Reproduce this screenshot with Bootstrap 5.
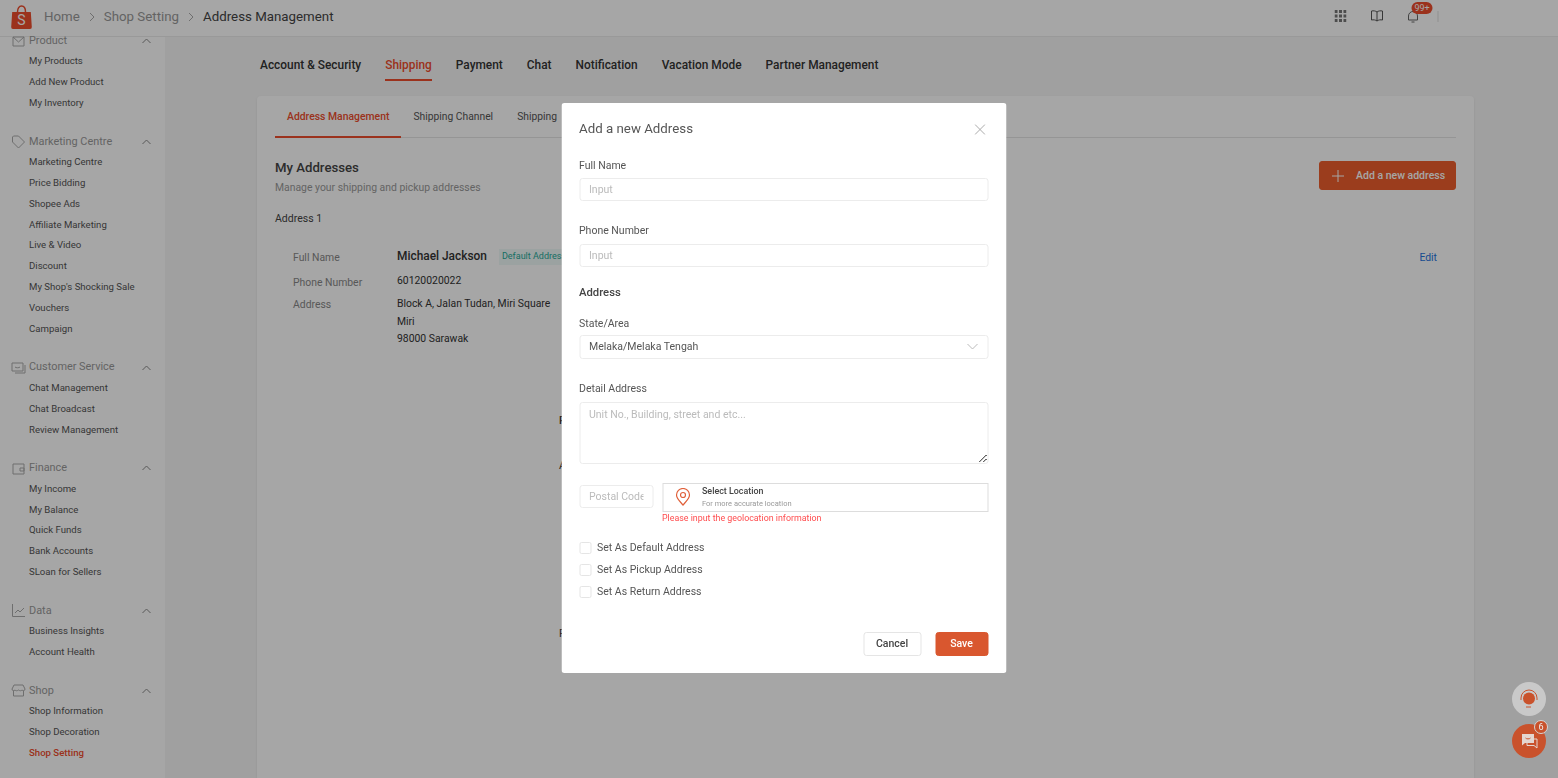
<!DOCTYPE html>
<html lang="en">
<head>
<meta charset="UTF-8">
<title>Address Management</title>
<link href="https://cdn.jsdelivr.net/npm/bootstrap@5.3.0/dist/css/bootstrap.min.css" rel="stylesheet">
<style>
    html, body { height: 100%; }
    body {
        font-family: Roboto, "Liberation Sans", sans-serif;
        background: #f6f6f6;
        color: #333;
        overflow: hidden;
    }
    .topbar {
        height: 37px;
        background: #fff;
        border-bottom: 1px solid #ececec;
        padding: 0 121px 2px 11px;
    }
    .crumbs { font-size: 13.3px; color: #999; margin-left: 12px; }
    .crumbs .sep { width: 24px; display: flex; justify-content: center; }
    .crumbs .now { color: #444; }
    .top-divider { width: 1px; height: 11px; background: #ddd; margin-left: -5px; }
    .top-icons { gap: 24px; margin-bottom: 2px; transform: translateX(1.5px); }
    .bell-badge {
        position: absolute; top: -8px; left: 4px;
        background: #ee4d2d; color: #fff;
        font-size: 9px; line-height: 12px;
        padding: 0 3px; border-radius: 6px;
    }
    .layout { height: calc(100% - 37px); }
    .sidebar {
        width: 165px; background: #fff;
        flex: none; position: relative;
        font-size: 9.6px;
    }
    .sidebar .inner { margin-top: -6.4px; padding-left: 11px; padding-right: 14px; }
    .side-group { margin-bottom: 17.7px; }
    .side-group:last-child { margin-bottom: 0; }
    .side-head {
        height: 20.8px; color: #999; font-size: 10.9px;
        display: flex; align-items: center;
    }
    .side-head svg.ic { width: 15px; height: 15px; margin-right: 3px; flex: none; }
    .side-head svg.chev { width: 9px; height: 6px; margin-left: auto; }
    .side-link { height: 20.8px; line-height: 20.8px; padding-left: 18px; color: #555; }
    .side-link.active { color: #ee4d2d; font-weight: 500; }
    .main { padding-left: 92px; padding-right: 84px; min-width: 0; }
    .top-tabs { height: 59px; gap: 24px; padding: 18px 0 0 3px; font-size: 11.9px; font-weight: 500; color: #333; flex: none; }
    .top-tabs span { height: 26px; line-height: 20px; white-space: nowrap; }
    .top-tabs .active { color: #ee4d2d; border-bottom: 2px solid #ee4d2d; }
    .panel {
        background: #fff; border-radius: 4px 4px 0 0; flex-grow: 1;
        padding: 0 18px; box-shadow: 0 1px 3px rgba(0,0,0,.08);
    }
    .sub-tabs { height: 42px; border-bottom: 1px solid #e5e5e5; font-size: 10.3px; color: #555; }
    .sub-tabs span { padding: 13px 12px 0; white-space: nowrap; }
    .sub-tabs .active { color: #ee4d2d; font-size: 10.4px; font-weight: 500; border-bottom: 2px solid #ee4d2d; height: 42px; }
    .head-row { padding-top: 22px; }
    .panel h2 { font-size: 13.2px; font-weight: 500; margin: 0; color: #444; line-height: 16px; }
    .panel .sub { font-size: 10.4px; color: #999; margin-top: 5px; line-height: 14px; }
    .btn-add {
        --bs-btn-bg: #ee5f2d; --bs-btn-color: #fff; --bs-btn-border-color: #ee5f2d;
        width: 137px; height: 29px; margin-top: 1px; padding: 0 0 0 12px; font-size: 10.5px; font-weight: 500;
        border-radius: 3px;
    }
    .addr-title { font-size: 10.5px; margin-top: 17px; line-height: 14px; color: #444; }
    .addr { margin-top: 21px; padding-left: 18px; font-size: 10.4px; }
    .addr .k { width: 104px; color: #888; flex: none; }
    .addr .name { font-size: 11.9px; font-weight: 500; margin-top: -2px; }
    .addr-row1 { height: 22px; }
    .addr-row2 { height: 26px; }
    .addr-row2 .k { margin-top: 1px; }
    .addr-row2 .val { margin-top: -2px; }
    .addr-row3 { line-height: 17.5px; }
    .addr-row3 .k { margin-top: 1px; }
    .tag { color: #26aa99; background: #eef9f7; font-size: 9px; padding: 1px 3px; margin: -2px 0 0 12px; }
    .edit { color: #2673dd; margin-left: auto; margin-right: 19px; }
    .peek { margin-left: 284px; font-size: 11px; color: #333; }
    .peek-a { margin-top: 65px; }
    .peek-b { margin-top: 29px; }
    .peek-c { margin-top: 151px; }

    .modal-backdrop { --bs-backdrop-opacity: .35; }
    .modal-dialog { --bs-modal-width: 445px; margin: 103px auto 0; transform: translateX(4.5px); }
    .modal-content {
        --bs-modal-border-width: 0; --bs-modal-border-radius: 3px;
        height: 570px; padding: 0 18px; font-size: 10.5px; color: #555;
    }
    .modal-title { font-size: 13.3px; font-weight: 400; color: #555; line-height: 16px; }
    .top-row { padding-top: 18px; height: 55px; }
    .close-x { width: 11px; height: 11px; margin: 3px 3px 0 0; }
    .lbl { line-height: 14px; padding-top: 1px; margin-bottom: 4.5px; display: block; color: #555; }
    .form-control, .form-select {
        font-size: 10.5px; color: #555; border: 1px solid #ececec; border-radius: 3px;
        padding: 0 9px; height: 23.5px; min-height: 0; line-height: 21px;
    }
    .form-control::placeholder { color: #bbb; }
    .form-select {
        background-size: 12px 9px; background-position: right 9px center;
        background-image: url("data:image/svg+xml,%3Csvg xmlns='http://www.w3.org/2000/svg' viewBox='0 0 12 7'%3E%3Cpath fill='none' stroke='%23bbb' d='M1 1l5 5 5-5'/%3E%3C/svg%3E");
    }
    textarea.form-control { height: 62px; padding-top: 5px; line-height: 14px; margin-top: 5.5px; }
    .lbl-phone { margin-top: 22px; margin-bottom: 5.5px; }
    .lbl-state { margin-top: 16px; margin-bottom: 4px; }
    .lbl-detail { margin-top: 22.5px; margin-bottom: 0; }
    .section { font-size: 11.3px; font-weight: 500; color: #444; line-height: 14px; margin-top: 19px; }
    .geo-row { margin-top: 19px; }
    .postal { width: 74px; height: 23px; margin-top: 2px; flex: none; }
    .geo {
        height: 29.5px; flex: 1; border: 1px solid #ddd; padding-left: 12px;
        display: flex; align-items: center; margin-left: 9px;
    }
    .geo svg { width: 15px; height: 18px; margin-right: 12px; flex: none; }
    .geo .t1 { font-size: 8.9px; font-weight: 500; line-height: 11px; color: #444; }
    .geo .t2 { font-size: 7.5px; color: #999; line-height: 10px; margin-top: 2px; }
    .geo-err { color: #ff4d4f; font-size: 8.85px; line-height: 12px; margin: 0 0 0 83px; }
    .checks { margin-top: 17px; }
    .form-check { min-height: 0; padding-left: 18px; margin: 0 0 8px; line-height: 14px; }
    .form-check .form-check-input {
        width: 12px; height: 12px; margin: 1px 0 0 -18px;
        border: 1px solid #e5e5e5; border-radius: 2px;
    }
    .foot { margin-top: 33px; }
    .btn-cancel, .btn-save { height: 23.5px; font-size: 10.5px; font-weight: 500; padding: 0; border-radius: 3px; }
    .btn-cancel { --bs-btn-color: #444; --bs-btn-border-color: #e5e5e5; width: 58px; }
    .btn-save { --bs-btn-bg: #d9572f; --bs-btn-color: #fff; --bs-btn-border-color: #d9572f; width: 53px; margin-left: 14px; }
    .float-btn {
        position: fixed; right: 12px; width: 34px; height: 34px; border-radius: 50%;
        z-index: 1060; display: flex; align-items: center; justify-content: center;
    }
    .float-help { bottom: 62px; background: #c9c9c9; }
    .float-chat { bottom: 20px; background: #c9522c; }
    .chat-badge {
        position: absolute; top: -4px; right: -2px; width: 14px; height: 14px; border-radius: 50%;
        background: #c9522c; border: 1px solid #d5d5d5; color: #eee; font-size: 9px; line-height: 12px; text-align: center;
    }
</style>
</head>
<body>
<header class="topbar d-flex align-items-center">
    <svg width="21" height="24" viewBox="0 0 21 24" class="flex-shrink-0"><path fill="#ee4d2d" d="M1.2 7h18.6l1 15a1.8 1.8 0 0 1-1.8 1.9H2A1.8 1.8 0 0 1 .2 22z"/><path fill="none" stroke="#ee4d2d" stroke-width="1.5" d="M6.5 7c0-3.600 1.700-6 4-6s4 2.400 4 6"/><text x="10.5" y="20" font-family="Roboto, sans-serif" font-size="14" fill="#fff" text-anchor="middle">S</text></svg>
    <div class="crumbs d-flex align-items-center">
        <span>Home</span>
        <span class="sep"><svg width="6" height="10" viewBox="0 0 6 10" fill="none" stroke="#aaa"><path d="M1 1l4 4-4 4"/></svg></span>
        <span>Shop Setting</span>
        <span class="sep"><svg width="6" height="10" viewBox="0 0 6 10" fill="none" stroke="#aaa"><path d="M1 1l4 4-4 4"/></svg></span>
        <span class="now">Address Management</span>
    </div>
    <div class="ms-auto top-icons d-flex align-items-center">
        <svg width="12" height="12" viewBox="0 0 12 12" fill="#777"><rect width="3" height="3"/><rect x="4.5" width="3" height="3"/><rect x="9" width="3" height="3"/><rect y="4.5" width="3" height="3"/><rect x="4.5" y="4.5" width="3" height="3"/><rect x="9" y="4.5" width="3" height="3"/><rect y="9" width="3" height="3"/><rect x="4.5" y="9" width="3" height="3"/><rect x="9" y="9" width="3" height="3"/></svg>
        <svg width="13" height="12" viewBox="0 0 13 12" fill="none" stroke="#555"><path d="M6.5 2C5 .8 3 .6 1 1v9c2-.4 4-.2 5.5 1 1.500-1.200 3.500-1.400 5.500-1V1c-2-.4-4-.2-5.500 1zM6.500 2v9"/></svg>
        <span class="position-relative d-flex">
            <svg width="11" height="13" viewBox="0 0 11 13" fill="none" stroke="#666"><path d="M1 10V6a4.500 4.500 0 0 1 9 0v4zM4 12h3"/></svg>
            <span class="bell-badge">99+</span>
        </span>
        <span class="top-divider"></span>
    </div>
</header>
<div class="layout d-flex">
    <nav class="sidebar">
        <div class="inner" id="side"></div>
    </nav>
    <main class="main flex-grow-1 d-flex flex-column">
        <div class="top-tabs d-flex">
            <span>Account &amp; Security</span><span class="active">Shipping</span><span>Payment</span><span>Chat</span><span>Notification</span><span>Vacation Mode</span><span>Partner Management</span>
        </div>
        <section class="panel">
            <div class="sub-tabs d-flex">
                <span class="active">Address Management</span><span>Shipping Channel</span><span>Shipping</span>
            </div>
            <div class="head-row d-flex justify-content-between">
                <div>
                    <h2>My Addresses</h2>
                    <div class="sub">Manage your shipping and pickup addresses</div>
                    <div class="addr-title">Address 1</div>
                </div>
                <button class="btn btn-add d-flex align-items-center" type="button">
                    <svg width="12" height="12" viewBox="0 0 12 12" stroke="#fff" class="me-2"><path d="M6 0v12M0 6h12"/></svg>
                    <span class="ms-1">Add a new address</span>
                </button>
            </div>
            <div class="addr">
                <div class="addr-row1 d-flex align-items-center">
                    <span class="k">Full Name</span><span class="name">Michael Jackson</span><span class="tag">Default Address</span>
                    <span class="edit">Edit</span>
                </div>
                <div class="addr-row2 d-flex align-items-center">
                    <span class="k">Phone Number</span><span class="val">60120020022</span>
                </div>
                <div class="addr-row3 d-flex">
                    <span class="k">Address</span>
                    <span>Block A, Jalan Tudan, Miri Square<br>Miri<br>98000 Sarawak</span>
                </div>
            </div>
            <div class="peek">
                <div class="fw-medium peek-a">Pickup</div>
                <div class="peek-b">Address</div>
                <div class="peek-c">Full Name</div>
            </div>
        </section>
    </main>
</div>

<div class="modal-backdrop show"></div>
<div class="modal d-block" tabindex="-1">
    <div class="modal-dialog">
        <div class="modal-content">
            <div class="top-row d-flex justify-content-between">
                <h5 class="modal-title">Add a new Address</h5>
                <svg class="close-x" viewBox="0 0 11 11" stroke="#aaa" fill="none"><path d="M.5.5l10 10M10.5.5l-10 10"/></svg>
            </div>
            <form>
                <label class="lbl">Full Name</label>
                <input class="form-control" placeholder="Input">
                <label class="lbl lbl-phone">Phone Number</label>
                <input class="form-control" placeholder="Input">
                <div class="section">Address</div>
                <label class="lbl lbl-state">State/Area</label>
                <select class="form-select"><option>Melaka/Melaka Tengah</option></select>
                <label class="lbl lbl-detail">Detail Address</label>
                <textarea class="form-control" placeholder="Unit No., Building, street and etc..."></textarea>
                <div class="geo-row d-flex align-items-start">
                    <input class="form-control postal" placeholder="Postal Code">
                    <div class="geo">
                        <svg viewBox="0 0 15 18" fill="none" stroke="#e0603a" stroke-width="1.2"><path d="M7.5 17C4.500 13.500 1 10.500 1 7a6.500 6.500 0 0 1 13 0c0 3.500-3.500 6.500-6.500 10z"/><circle cx="7.5" cy="7" r="2.5"/></svg>
                        <div><div class="t1">Select Location</div><div class="t2">For more accurate location</div></div>
                    </div>
                </div>
                <p class="geo-err">Please input the geolocation information</p>
                <div class="checks">
                    <div class="form-check"><input class="form-check-input" type="checkbox"><label class="form-check-label">Set As Default Address</label></div>
                    <div class="form-check"><input class="form-check-input" type="checkbox"><label class="form-check-label">Set As Pickup Address</label></div>
                    <div class="form-check"><input class="form-check-input" type="checkbox"><label class="form-check-label">Set As Return Address</label></div>
                </div>
                <div class="foot d-flex justify-content-end">
                    <button class="btn btn-cancel" type="button">Cancel</button>
                    <button class="btn btn-save" type="button">Save</button>
                </div>
            </form>
        </div>
    </div>
</div>

<div class="float-btn float-help">
    <svg width="20" height="20" viewBox="0 0 20 20"><circle cx="10" cy="9.5" r="6" fill="#c9522c"/><path fill="none" stroke="#c9522c" d="M2 11V9a8 8 0 0 1 16 0v2M7 18h5"/></svg>
</div>
<div class="float-btn float-chat">
    <svg width="17" height="16" viewBox="0 0 17 16"><path fill="none" stroke="#e4d6d0" d="M13 6h3v9l-3-2.500H6V10"/><path fill="#e4d6d0" d="M1 1h12v9H4l-3 2.500z"/><path fill="none" stroke="#c9522c" d="M4.500 5c1 1.200 4 1.200 5 0"/></svg>
    <span class="chat-badge">6</span>
</div>

<script>
    // sidebar data, same markup for every group
    const chev = '<svg class="chev" viewBox="0 0 9 6" fill="none" stroke="#888"><path d="M.5 5L4.500 1l4 4"/></svg>';
    const ic = {
        box: '<path d="M2 3h11v9H2zM2 3l5.500 5L13 3"/>',
        tag: '<path d="M1.500 3v5l6 6 6-6-6-6H2.500zM4.500 5h.01"/>',
        chat: '<path d="M1 3h11v8H1zM4 7c1 1 4 1 5 0M14 5v8H4"/>',
        wallet: '<path d="M2 3h11v10H2zM9 7h4v3H9z"/>',
        chart: '<path d="M1.500 1v12.500H14M4 10l3-3 2 2 4-4"/>',
        shop: '<path d="M3 2h9l2 4c0 2-2 2-3 1-1 1-2 1-3.500 0C6 8 5 8 4 7 3 8 1 8 1 6zM2.500 8v5h10V8"/>'
    };
    const groups = [
        ['Product', 'box', ['My Products', 'Add New Product', 'My Inventory']],
        ['Marketing Centre', 'tag', ['Marketing Centre', 'Price Bidding', 'Shopee Ads', 'Affiliate Marketing', 'Live & Video', 'Discount', "My Shop's Shocking Sale", 'Vouchers', 'Campaign']],
        ['Customer Service', 'chat', ['Chat Management', 'Chat Broadcast', 'Review Management']],
        ['Finance', 'wallet', ['My Income', 'My Balance', 'Quick Funds', 'Bank Accounts', 'SLoan for Sellers']],
        ['Data', 'chart', ['Business Insights', 'Account Health']],
        ['Shop', 'shop', ['Shop Information', 'Shop Decoration', 'Shop Setting']]
    ];
    document.getElementById('side').innerHTML = groups.map(([title, icon, links]) => `
        <div class="side-group">
            <div class="side-head"><svg class="ic" viewBox="0 0 15 15" fill="none" stroke="#aaa">${ic[icon]}</svg>${title}${chev}</div>
            ${links.map(l => `<div class="side-link${l === 'Shop Setting' ? ' active' : ''}">${l.replace('&', '&amp;')}</div>`).join('')}
        </div>`).join('');
</script>
<script src="https://cdn.jsdelivr.net/npm/bootstrap@5.3.0/dist/js/bootstrap.bundle.min.js"></script>
</body>
</html>
